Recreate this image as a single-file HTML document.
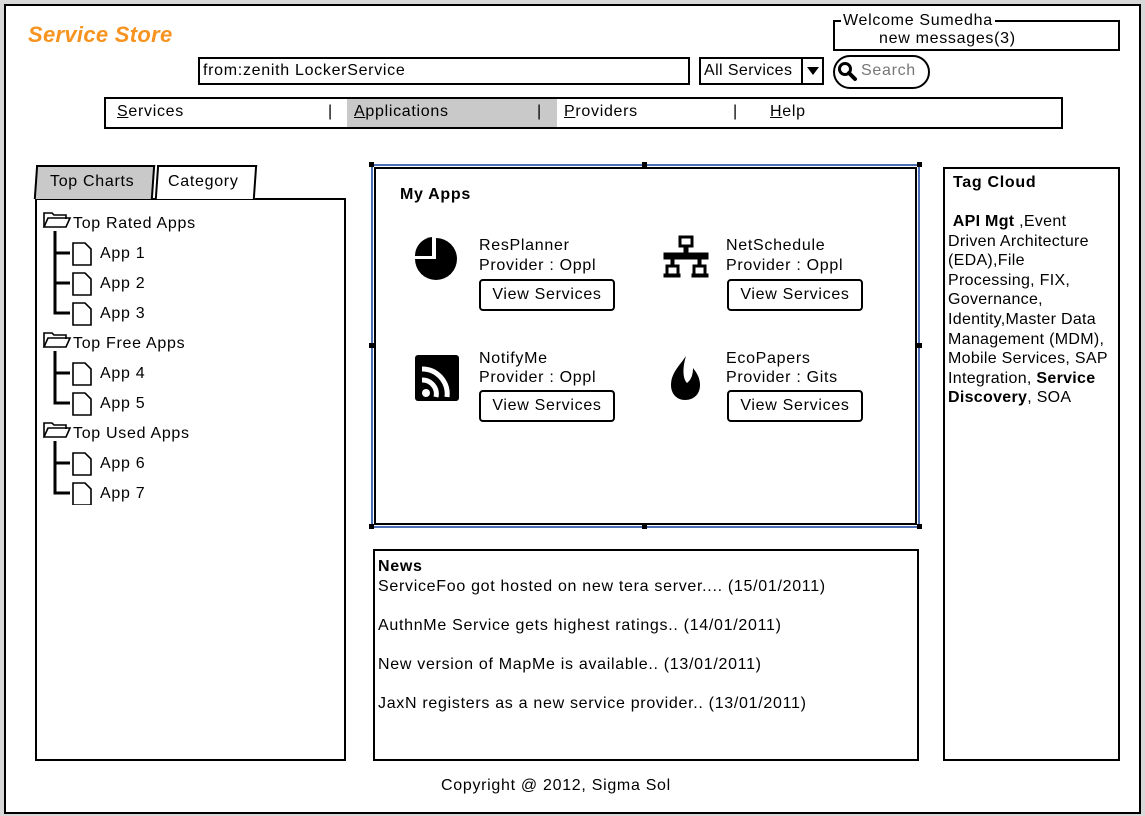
<!DOCTYPE html>
<html><head><meta charset="utf-8"><style>
*{margin:0;padding:0;box-sizing:border-box}
body{width:1145px;height:816px;background:#d8d8d8;position:relative;overflow:hidden;font-family:"Liberation Sans","DejaVu Sans",sans-serif;font-size:16px;color:#000;letter-spacing:0.7px}
.a{position:absolute}
.b{position:absolute;border:2px solid #000;background:#fff}
.t{position:absolute;white-space:nowrap;line-height:20px;padding-top:2px}
u{text-decoration:underline}
.btn{position:absolute;border:2px solid #000;border-radius:4px;background:#fff;text-align:center;line-height:28px;width:136px;height:32px}
</style></head><body>
<div class="b" style="left:4px;top:4px;width:1137px;height:810px;border-width:2px"></div>
<div class="t" style="left:28px;top:21px;font-size:22px;font-weight:bold;font-style:italic;color:#f7931e;line-height:24px;letter-spacing:0.3px">Service Store</div>

<div class="b" style="left:833px;top:20px;width:287px;height:31px"></div>
<div class="t" style="left:841px;top:9px;background:#fff;padding:2px 2px 0">Welcome Sumedha</div>
<div class="t" style="left:879px;top:27px">new messages(3)</div>

<div class="b" style="left:198px;top:57px;width:492px;height:28px"></div>
<div class="t" style="left:203px;top:59px">from:zenith LockerService</div>
<div class="b" style="left:699px;top:57px;width:125px;height:28px"></div>
<div class="a" style="left:801px;top:57px;width:2px;height:28px;background:#000"></div>
<div class="t" style="left:704px;top:59px;letter-spacing:0.4px">All Services</div>
<div class="a" style="left:807px;top:67px;width:0;height:0;border-left:6px solid transparent;border-right:6px solid transparent;border-top:8px solid #000"></div>
<div class="b" style="left:833px;top:55px;width:97px;height:34px;border-radius:17px"></div>
<svg class="a" style="left:837px;top:61px" width="22" height="22" viewBox="0 0 22 22"><circle cx="8" cy="8" r="5.5" fill="none" stroke="#000" stroke-width="3"/><path d="M12 12 L18 18" stroke="#000" stroke-width="4" stroke-linecap="round"/></svg>
<div class="t" style="left:861px;top:59px;color:#777">Search</div>

<div class="b" style="left:104px;top:97px;width:959px;height:32px"></div>
<div class="a" style="left:347px;top:99px;width:210px;height:28px;background:#c9c9c9"></div>
<div class="t" style="left:117px;top:100px"><u>S</u>ervices</div>
<div class="t" style="left:328px;top:100px">|</div>
<div class="t" style="left:354px;top:100px"><u>A</u>pplications</div>
<div class="t" style="left:537px;top:100px">|</div>
<div class="t" style="left:564px;top:100px"><u>P</u>roviders</div>
<div class="t" style="left:733px;top:100px">|</div>
<div class="t" style="left:770px;top:100px"><u>H</u>elp</div>

<div class="b" style="left:35px;top:198px;width:311px;height:563px"></div>
<div class="a" style="left:35px;top:165px;width:119px;height:34px;background:#c9c9c9;border:2px solid #000;border-bottom:none;transform:skewX(-4deg)"></div>
<div class="t" style="left:50px;top:170px">Top Charts</div>
<div class="a" style="left:156px;top:165px;width:100px;height:34px;background:#fff;border:2px solid #000;border-bottom:none;transform:skewX(-4deg)"></div>
<div class="t" style="left:168px;top:170px">Category</div>

<svg class="a" style="left:40px;top:205px" width="100" height="300">
<g fill="none" stroke="#000" stroke-width="1.6">
<path d="M4 22 L4 8 L12 8 L14 10 L26 10 L26 14"/><path d="M4 22 L8 13 L30 13 L26 22 Z"/>
<path d="M4 142 L4 128 L12 128 L14 130 L26 130 L26 134"/><path d="M4 142 L8 133 L30 133 L26 142 Z"/>
<path d="M4 232 L4 218 L12 218 L14 220 L26 220 L26 224"/><path d="M4 232 L8 223 L30 223 L26 232 Z"/>
</g>
<g fill="none" stroke="#000" stroke-width="3">
<path d="M15 26 L15 108 L30 108 M15 48 L30 48 M15 78 L30 78"/>
<path d="M15 146 L15 198 L30 198 M15 168 L30 168"/>
<path d="M15 236 L15 288 L30 288 M15 258 L30 258"/>
</g>
<g fill="#fff" stroke="#000" stroke-width="1.6">
<path d="M33 38 L45 38 L51 44 L51 60 L33 60 Z"/><path d="M33 68 L45 68 L51 74 L51 90 L33 90 Z"/><path d="M33 98 L45 98 L51 104 L51 120 L33 120 Z"/>
<path d="M33 158 L45 158 L51 164 L51 180 L33 180 Z"/><path d="M33 188 L45 188 L51 194 L51 210 L33 210 Z"/>
<path d="M33 248 L45 248 L51 254 L51 270 L33 270 Z"/><path d="M33 278 L45 278 L51 284 L51 300 L33 300 Z"/>
</g></svg>
<div class="t" style="left:73px;top:212px">Top Rated Apps</div>
<div class="t" style="left:100px;top:242px">App 1</div>
<div class="t" style="left:100px;top:272px">App 2</div>
<div class="t" style="left:100px;top:302px">App 3</div>
<div class="t" style="left:73px;top:332px">Top Free Apps</div>
<div class="t" style="left:100px;top:362px">App 4</div>
<div class="t" style="left:100px;top:392px">App 5</div>
<div class="t" style="left:73px;top:422px">Top Used Apps</div>
<div class="t" style="left:100px;top:452px">App 6</div>
<div class="t" style="left:100px;top:482px">App 7</div>

<div class="a" style="left:371px;top:164px;width:549px;height:364px;border:2px solid #4a6fb5"></div>
<div class="a" style="left:374px;top:167px;width:543px;height:358px;border:2px solid #000;background:#fff"></div>
<div class="a" style="left:369px;top:162px;width:5px;height:5px;background:#000"></div>
<div class="a" style="left:642px;top:162px;width:5px;height:5px;background:#000"></div>
<div class="a" style="left:917px;top:162px;width:5px;height:5px;background:#000"></div>
<div class="a" style="left:369px;top:343px;width:5px;height:5px;background:#000"></div>
<div class="a" style="left:917px;top:343px;width:5px;height:5px;background:#000"></div>
<div class="a" style="left:369px;top:524px;width:5px;height:5px;background:#000"></div>
<div class="a" style="left:642px;top:524px;width:5px;height:5px;background:#000"></div>
<div class="a" style="left:917px;top:524px;width:5px;height:5px;background:#000"></div>
<div class="t" style="left:400px;top:183px;font-weight:bold">My Apps</div>

<svg class="a" style="left:412px;top:234px" width="48" height="50"><path d="M24 4 A21 21 0 1 1 3 25 L24 25 Z" fill="#000"/><path d="M3 22 A19 19 0 0 1 20 3 L20 22 Z" fill="#000"/></svg>
<div class="t" style="left:479px;top:234px">ResPlanner</div>
<div class="t" style="left:479px;top:254px">Provider : Oppl</div>
<div class="btn" style="left:479px;top:279px">View Services</div>

<svg class="a" style="left:662px;top:234px" width="50" height="46"><g fill="#000" stroke="#000"><rect x="18" y="3" width="12" height="9" fill="none" stroke-width="3"/><rect x="22" y="12" width="4" height="8"/><rect x="2" y="19" width="44" height="6"/><rect x="9" y="25" width="3" height="7"/><rect x="36" y="25" width="3" height="7"/><rect x="5" y="32" width="11" height="9" fill="none" stroke-width="3"/><rect x="32" y="32" width="11" height="9" fill="none" stroke-width="3"/><rect x="2" y="40" width="16" height="3"/><rect x="30" y="40" width="16" height="3"/></g></svg>
<div class="t" style="left:726px;top:234px">NetSchedule</div>
<div class="t" style="left:726px;top:254px">Provider : Oppl</div>
<div class="btn" style="left:727px;top:279px">View Services</div>

<svg class="a" style="left:413px;top:353px" width="48" height="50"><rect x="2" y="2" width="44" height="46" rx="3" fill="#000"/><g fill="none" stroke="#fff" stroke-width="5"><path d="M9 16 A25 25 0 0 1 34 44"/><path d="M9 27 A14 14 0 0 1 23 44"/></g><circle cx="13" cy="40" r="4" fill="#fff"/></svg>
<div class="t" style="left:479px;top:347px">NotifyMe</div>
<div class="t" style="left:479px;top:366px">Provider : Oppl</div>
<div class="btn" style="left:479px;top:390px">View Services</div>

<svg class="a" style="left:666px;top:353px" width="40" height="50"><path d="M20 3 C14 12 5 20 5 32 C5 41 11 47 19 47 C28 47 34 41 34 32 C34 24 30 19 27 15 C27 22 25 27 21 30 C17 26 16 16 20 3 Z" fill="#000"/></svg>
<div class="t" style="left:726px;top:347px">EcoPapers</div>
<div class="t" style="left:726px;top:366px">Provider : Gits</div>
<div class="btn" style="left:727px;top:390px">View Services</div>

<div class="b" style="left:373px;top:549px;width:546px;height:212px"></div>
<div class="t" style="left:378px;top:555px;font-weight:bold">News</div>
<div class="t" style="left:378px;top:575px">ServiceFoo got hosted on new tera server.... (15/01/2011)</div>
<div class="t" style="left:378px;top:614px">AuthnMe Service gets highest ratings.. (14/01/2011)</div>
<div class="t" style="left:378px;top:653px">New version of MapMe is available.. (13/01/2011)</div>
<div class="t" style="left:378px;top:692px">JaxN registers as a new service provider.. (13/01/2011)</div>

<div class="b" style="left:943px;top:167px;width:177px;height:594px"></div>
<div class="t" style="left:953px;top:171px;font-weight:bold">Tag Cloud</div>
<div class="a" style="left:948px;top:212px;line-height:19.6px;white-space:nowrap;letter-spacing:0.3px"><b>&nbsp;API Mgt</b> ,Event<br>Driven Architecture<br>(EDA),File<br>Processing, FIX,<br>Governance,<br>Identity,Master Data<br>Management (MDM),<br>Mobile Services, SAP<br>Integration, <b>Service</b><br><b>Discovery</b>, SOA</div>

<div class="t" style="left:441px;top:774px">Copyright @ 2012, Sigma Sol</div>
</body></html>
